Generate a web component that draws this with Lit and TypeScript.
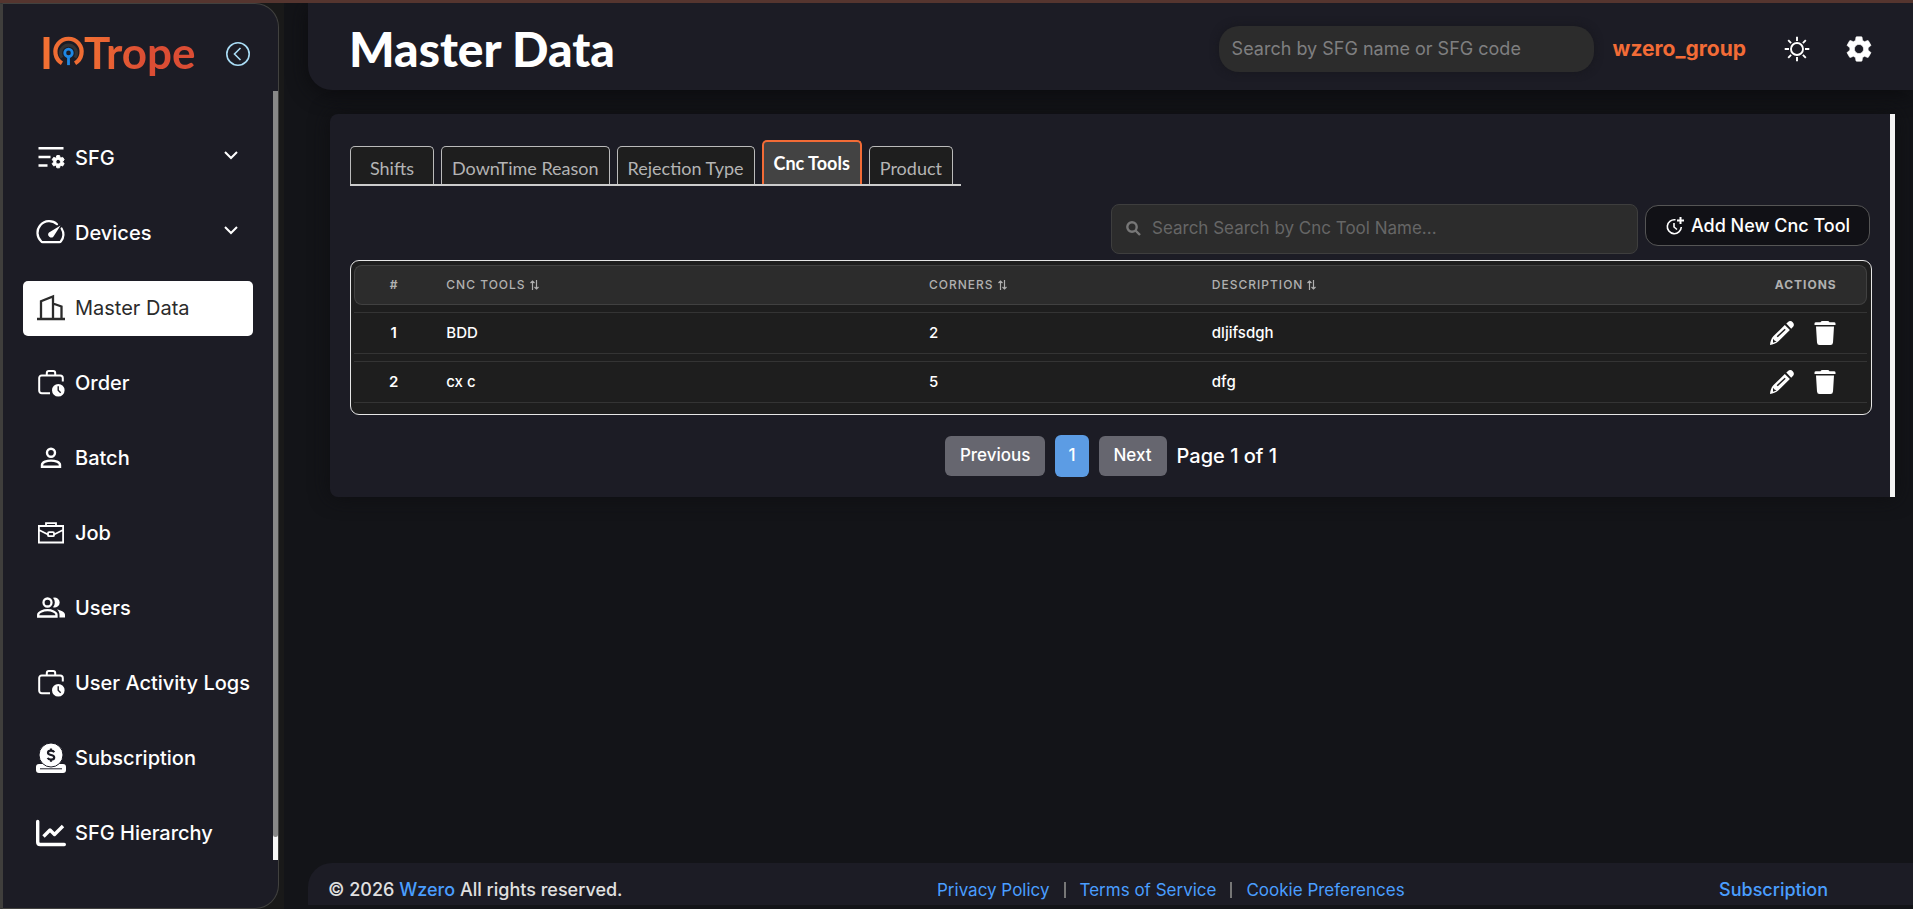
import { LitElement, html, css, svg, nothing } from "lit";
import { customElement, property, state } from "lit/decorators.js";
import { classMap } from "lit/directives/class-map.js";

const briefcaseClock = svg`<path fill="none" stroke="currentColor" stroke-width="2" stroke-linejoin="round" d="M13 24.200H4.800C3.200 24.200 2.200 23.200 2.200 21.600V9C2.200 7.400 3.200 6.400 4.800 6.400H23.200C24.800 6.400 25.800 7.400 25.800 9V12.500M9.800 6.400V4C9.800 2.800 10.500 2 11.800 2H16.200C17.500 2 18.200 2.800 18.200 4V6.400"/><path fill="currentColor" fill-rule="evenodd" d="M21.300 14.900a6.300 6.300 0 1 1 0 12.600a6.300 6.300 0 0 1 0-12.600zM20.500 17.200V21.500L23.200 24.300L24.200 23.300L21.900 20.900V17.200z"/>`;

const gearPath = "M19.14 12.94c.04-.3.06-.61.06-.94 0-.32-.02-.64-.07-.94l2.03-1.58a.49.49 0 0 0 .12-.61l-1.920-3.320a.488.488 0 0 0-.59-.22l-2.390.960c-.5-.38-1.030-.7-1.620-.94l-.36-2.540a.484.484 0 0 0-.48-.41h-3.840c-.24 0-.43.17-.47.41l-.36 2.540c-.59.24-1.130.57-1.620.94l-2.390-.96c-.22-.08-.47 0-.59.22L2.740 8.870c-.12.21-.08.47.12.61l2.030 1.580c-.05.3-.09.63-.09.94s.02.64.07.94l-2.030 1.580a.49.49 0 0 0-.12.61l1.920 3.320c.12.22.37.29.59.22l2.390-.96c.5.38 1.030.7 1.620.94l.36 2.540c.05.24.24.41.48.41h3.840c.24 0 .44-.17.47-.41l.36-2.540c.59-.24 1.130-.56 1.620-.94l2.390.96c.22.08.47 0 .59-.22l1.920-3.320c.12-.22.07-.47-.12-.61l-2.010-1.580zM12 15.600c-1.980 0-3.600-1.620-3.600-3.600s1.620-3.600 3.600-3.600 3.600 1.620 3.600 3.600-1.620 3.600-3.600 3.600z";

const icons: Record<string, unknown> = {
  sfg: svg`<path fill="none" stroke="currentColor" stroke-width="2.400" d="M1.500 4.300H26.500M1.500 13H13.500M1.500 21.500H10.500"/><g transform="translate(13.500 10) scale(.64)"><path fill="currentColor" stroke="currentColor" stroke-width="1.500" d=${gearPath}/></g>`,
  devices: svg`<path fill="none" stroke="currentColor" stroke-width="2.200" stroke-linecap="round" stroke-linejoin="round" d="M20 5.200A11.500 11.500 0 0 0 4.300 22.500C4.600 23 5 23.200 5.600 23.200H22.400C23 23.200 23.500 23 23.800 22.500A11.500 11.500 0 0 0 24.600 9.500"/><path fill="currentColor" d="M23.500 6.500L16.500 17.400A2.900 2.900 0 1 1 12 13.500z"/>`,
  building: svg`<path fill="none" stroke="currentColor" stroke-width="2.300" d="M0 25H28M4 25V7.200L16 2.500V25M16 9.500L24.500 12.500V25"/>`,
  order: briefcaseClock,
  batch: svg`<g fill="none" stroke="currentColor" stroke-width="2.400"><circle cx="14" cy="8.700" r="4"/><path d="M5 22.700V21C5 18 10 16.600 14 16.600S23 18 23 21V22.700z"/></g>`,
  job: svg`<g fill="none" stroke="currentColor" stroke-width="1.800"><path d="M1.900 7H26.100V23.500H1.900zM9 7V4.200H19V7M2 11L11 15.500M26 11L17 15.500"/><rect x="11" y="13.200" width="6" height="4" rx="1"/></g>`,
  users: svg`<g fill="none" stroke="currentColor" stroke-width="2.300"><circle cx="10.500" cy="8.500" r="4"/><path d="M1.200 22.500V20.800C1.200 18 6.500 16.200 10.500 16.200S19.500 18 19.500 20.800V22.500z"/></g><path fill="currentColor" d="M16 3.800A5 5 0 1 1 16 13.200A7 7 0 0 0 16 3.800zM20 15.400C23.500 16 28 17.700 28 20.700V23.600H22.500V20.700C22.500 18.500 21.500 16.700 20 15.400z"/>`,
  coin: svg`<path fill="currentColor" d="M2 20H26Q29 20 29 23V26Q29 29 26 29H2Q-1 29-1 26V23Q-1 20 2 20z"/><path stroke="#1c1c25" stroke-width="1" d="M3 24.800H25"/><circle cx="14" cy="11" r="12" fill="currentColor" stroke="#1c1c25" stroke-width="1"/><path fill="none" stroke="#1c1c25" stroke-width="2.200" d="M17.200 8.300C16.500 7 15.300 6.700 14 6.700C12.200 6.700 11 7.500 11 8.800C11 12 17.200 10 17.200 13.400C17.200 14.800 15.900 15.600 14 15.600C12.400 15.600 11.200 15 10.700 13.800M14 4.500V7M14 15.400V17.800"/>`,
  chart: svg`<path fill="none" stroke="currentColor" stroke-width="3.400" stroke-linecap="round" stroke-linejoin="round" d="M.700 2.500V23Q.700 25.500 3.200 25.500H27.300"/><path fill="none" stroke="currentColor" stroke-width="3.400" stroke-linejoin="round" d="M6.500 17.500L13 11L17.500 15.500L26 7"/>`,
};

interface NavItem { label: string; icon: string; expandable?: boolean; active?: boolean }

const NAV: NavItem[] = [
  { label: "SFG", icon: "sfg", expandable: true },
  { label: "Devices", icon: "devices", expandable: true },
  { label: "Master Data", icon: "building", active: true },
  { label: "Order", icon: "order" },
  { label: "Batch", icon: "batch" },
  { label: "Job", icon: "job" },
  { label: "Users", icon: "users" },
  { label: "User Activity Logs", icon: "order" },
  { label: "Subscription", icon: "coin" },
  { label: "SFG Hierarchy", icon: "chart" },
];

@customElement("side-nav")
export class SideNav extends LitElement {
  static styles = css`
    :host { display: block; flex: none; width: 284px; background: #191919; }
    * { box-sizing: border-box; }
    .shell { height: 100%; width: 279px; display: flex; flex-direction: column; background: #1c1c25;
      border: 1px solid #41413f; border-left: 3px solid #3f3e3c; border-radius: 0 24px 24px 0; padding-bottom: 48px; }
    .brand { display: flex; align-items: center; justify-content: space-between; height: 87px; padding: 12px 28px 0 37px; flex: none; }
    .logo { display: flex; align-items: center; font: 700 44px/48px Lato, sans-serif; }
    .logo svg { margin-top: -4px; }
    .logo span { padding-bottom: 4px; background: linear-gradient(90deg, #f27033, #db4d34 55%); background-clip: text; -webkit-background-clip: text; color: transparent; }
    .logo .first { background: #f27033; background-clip: text; -webkit-background-clip: text; }
    .collapse { all: unset; display: block; width: 24px; height: 24px; cursor: pointer; }
    svg { display: block; overflow: visible; }
    .scroll { flex: 1; min-height: 0; display: flex; }
    .items { flex: 1; min-width: 0; display: flex; flex-direction: column; gap: 20px; padding: 40px 20px 0; overflow: hidden; }
    .item { display: flex; align-items: center; gap: 10px; flex: none; height: 55px; padding: 0 16px 2px 14px; border-radius: 5px;
      color: #fff; text-decoration: none; font-size: 20px; font-weight: 500; line-height: 30px; white-space: nowrap; }
    .item.active { background: #fff; color: #2b2b2b; font-weight: 400; }
    .label { flex: 1; }
    .track { flex: none; width: 5px; background: #f7f7f7; }
    .thumb { height: 97%; background: #888; border-radius: 0 0 3px 3px; }
  `;
  render() {
    return html`<div class="shell">
      <div class="brand">
        <div class="logo" role="img" aria-label="IOTrope"><span class="first">I</span>
          <svg width="31" height="30" viewBox="0 0 33 32"><path d="M9.500 28A14 14 0 1 1 23.500 28" fill="none" stroke="#ef6c33" stroke-width="4.500"/><path d="M9.500 22A8.500 8.500 0 1 1 23.500 22" fill="none" stroke="#333" stroke-width="3.500"/><circle cx="16.500" cy="17" r="4" fill="none" stroke="#1e88e5" stroke-width="3"/><path d="M16.500 20.500V30" stroke="#1e88e5" stroke-width="3"/></svg>
          <span>Trope</span></div>
        <button class="collapse" aria-label="Collapse menu"><svg width="24" height="24" viewBox="0 0 24 24" fill="none" stroke="#a9dcf5" stroke-width="1.600"><circle cx="12" cy="12" r="11.200"/><path d="M14.500 6L8.500 12L14.500 18"/></svg></button>
      </div>
      <div class="scroll">
        <nav class="items">${NAV.map((n) => html`<a href="#" class=${classMap({ item: true, active: !!n.active })}>
          <svg width="28" height="28" viewBox="0 0 28 28">${icons[n.icon]}</svg><span class="label">${n.label}</span>
          ${n.expandable ? html`<svg width="12" height="12" viewBox="0 0 12 12" fill="none" stroke="currentColor" stroke-width="2"><path d="M0 0L6 6L12 0"/></svg>` : nothing}
        </a>`)}</nav>
        <div class="track"><div class="thumb"></div></div>
      </div>
    </div>`;
  }
}

@customElement("page-header")
export class PageHeader extends LitElement {
  @property() heading = "";
  static styles = css`
    :host { display: flex; align-items: center; flex: none; height: 87px; box-sizing: border-box; padding: 4px 40px 0 41px; background: #1c1c25;
      border-bottom-left-radius: 24px; box-shadow: 0 4px 20px #0c0c0f; }
    h1 { margin: 0 auto 0 0; color: #fff; font: 900 48px/60px Lato, sans-serif; }
    input { box-sizing: border-box; width: 375px; height: 46px; border: 0; border-radius: 20px; padding: 0 13px; background: #2c2c2c; color: #ddd;
      font: 400 18px/24px Inter, sans-serif; margin: 0 19px 0 0; box-shadow: 0 0 8px #17171d; }
    input::placeholder { color: #7f7f80; opacity: 1; }
    .user { color: #f26b36; font: 700 21px/24px Inter, sans-serif; margin-right: 37px; }
    button { all: unset; display: block; cursor: pointer; color: #fff; }
    button + button { margin-left: 34px; }
    svg { display: block; }
  `;
  render() {
    return html`<h1>${this.heading}</h1>
      <input type="search" aria-label="Search SFG" placeholder="Search by SFG name or SFG code" />
      <span class="user">wzero_group</span>
      <button aria-label="Toggle theme"><svg width="28" height="28" viewBox="0 0 28 28" fill="none" stroke="currentColor" stroke-width="1.900"><circle cx="14" cy="14" r="6"/><path d="M14 1.700V6M14 22V26.300M1.700 14H6M22 14H26.300M5.200 5.200L8.100 8.100M19.900 19.900L22.800 22.800M5.200 22.800L8.100 19.900M19.900 8.100L22.800 5.200"/></svg></button>
      <button aria-label="Settings"><svg width="28" height="28" viewBox="1 1 22 22" fill="currentColor"><path d=${gearPath} stroke="currentColor" stroke-width=".5" /></svg></button>`;
  }
}

interface Tool { name: string; corners: number; description: string }

@customElement("cnc-tools")
export class CncTools extends LitElement {
  @state() private active = "Cnc Tools";
  private tabs = ["Shifts", "DownTime Reason", "Rejection Type", "Cnc Tools", "Product"];
  private rows: Tool[] = [
    { name: "BDD", corners: 2, description: "dljifsdgh" },
    { name: "cx c", corners: 5, description: "dfg" },
  ];
  static styles = css`
    :host { display: flex; background: #1c1c25; border-radius: 8px 0 0 8px; border-right: 5px solid #f4f4f4; box-shadow: 0 0 20px #0e0e11; }
    * { box-sizing: border-box; }
    button { font-family: inherit; cursor: pointer; }
    svg { display: block; }
    .body { flex: 1; min-width: 0; padding: 26px 18px 20px 20px; }
    .tabs { display: flex; align-items: flex-end; gap: 7px; width: fit-content; padding-right: 8px; border-bottom: 2px solid #ccc; }
    .tab { min-width: 84px; height: 38px; padding: 4px 10px 0; border: 1px solid #bbb; border-bottom: 0; border-radius: 5px 5px 0 0;
      background: #1e1e1e; color: #b4b4b4; font: 400 18px/24px Lato, sans-serif; white-space: nowrap; }
    .tab.active { height: 44px; padding: 0 10px; border: 2px solid #f26b36; border-bottom: 0; background: #434343; color: #fff; font-weight: 700; }
    .tools { display: flex; align-items: flex-start; justify-content: flex-end; gap: 7px; margin: 18px 2px 6px 0; }
    .search { display: flex; align-items: center; gap: 11px; width: 527px; height: 50px; padding: 0 14px 2px; border: 1px solid #3e3e3e; border-radius: 8px; background: #2c2c2c; color: #777; }
    .search input { flex: 1; min-width: 0; border: 0; padding: 0; outline: 0; background: none; color: #ddd; font: 400 17px/24px Inter, sans-serif; }
    .search input::placeholder { color: #666; opacity: 1; }
    .add { display: flex; align-items: center; justify-content: center; gap: 6px; width: 225px; height: 41px; margin-top: 1px; padding: 0; border: 1px solid #555; border-radius: 13px;
      background: #111116; color: #fff; font-size: 18px; font-weight: 500; line-height: 24px; white-space: nowrap; }
    .frame { border: 1px solid #e6e6e6; border-radius: 9px; background: #1e1e1e; padding: 4px 4px 11px 3px; }
    table { width: 100%; table-layout: fixed; border-collapse: separate; border-spacing: 0; color: #fff; font-size: 15px; line-height: 20px; font-weight: 500; }
    th, td { text-align: left; padding: 0; }
    th { height: 40px; background: #2c2c2c; border: solid #414141; border-width: 1px 0; color: #b0b0b0; font-size: 12px; font-weight: 500; letter-spacing: 1px; }
    th:first-child { border-left-width: 1px; border-radius: 8px 0 0 8px; font-weight: 700; }
    th:last-child { border-right-width: 1px; border-radius: 0 8px 8px 0; font-weight: 700; }
    th:first-child, td:first-child { text-align: center; padding-right: 13px; }
    th:last-child { padding-right: 34px; text-align: right; }
    td:last-child { padding-right: 31px; }
    td { height: 42px; border: solid #343434; border-width: 1px 0; }
    td:first-child { font-weight: 600; }
    .gap td { height: 7px; border: 0; }
    .c1 { width: 6.100%; } .c2 { width: 31.900%; } .c3 { width: 18.700%; }
    .sort { display: inline-flex; align-items: center; gap: 4px; }
    .actions { display: flex; justify-content: flex-end; gap: 20px; }
    .actions button { all: unset; display: block; cursor: pointer; }
    .pager { display: flex; align-items: center; justify-content: center; gap: 10px; margin-top: 20px; color: #fff; font-size: 20px; font-weight: 500; line-height: 30px; height: 42px; }
    .pager button { border: 0; height: 40px; padding: 0 15px 2px; border-radius: 6px; background: #66666f; color: #fff; font-size: 17px; font-weight: 500; line-height: 24px; }
    .pager .current { height: 42px; padding: 0 13px 2px; background: #5c9ce4; }
  `;
  private sortable(label: string) {
    return html`<span class="sort">${label}<svg width="9" height="10" viewBox="0 0 9 10" fill="none" stroke="currentColor" stroke-width="1.200"><path d="M2.500 10V1M.500 3L2.500 1L4.500 3M6.500 0V9M4.500 7L6.500 9L8.500 7"/></svg></span>`;
  }
  render() {
    return html`<div class="body">
      <div class="tabs" role="tablist">${this.tabs.map((t) => html`<button role="tab" aria-selected=${t === this.active} class=${classMap({ tab: true, active: t === this.active })} @click=${() => (this.active = t)}>${t}</button>`)}</div>
      <div class="tools">
        <label class="search"><svg width="15" height="15" viewBox="0 0 15 15" fill="none" stroke="currentColor" stroke-width="2.400"><circle cx="6" cy="6" r="4.700"/><path d="M9.500 9.500L14 14"/></svg>
          <input type="text" aria-label="Search Cnc tools" placeholder="Search Search by Cnc Tool Name..." /></label>
        <button class="add"><svg width="20" height="20" viewBox="0 0 20 20" fill="none" stroke="currentColor" stroke-width="1.600"><path d="M10.500 3.800A7 7 0 1 0 16.300 11M9 7V11L12 13.500"/><path d="M15.500 1V8M12 4.500H19" stroke-width="2"/></svg>Add New Cnc Tool</button>
      </div>
      <div class="frame"><table>
        <colgroup><col class="c1" /><col class="c2" /><col class="c3" /><col /><col class="c1" /></colgroup>
        <thead><tr><th>#</th><th>${this.sortable("CNC TOOLS")}</th><th>${this.sortable("CORNERS")}</th><th>${this.sortable("DESCRIPTION")}</th><th>ACTIONS</th></tr></thead>
        <tbody>${this.rows.map((r, i) => html`<tr class="gap"><td colspan="5"></td></tr>
          <tr><td>${i + 1}</td><td>${r.name}</td><td>${r.corners}</td><td>${r.description}</td><td><div class="actions">
            <button aria-label="Edit"><svg width="24" height="24" viewBox="0 0 24 24"><path fill="currentColor" d="M16.300 2.600L17.800 1.200C19.300-.300 21.300-.300 22.700 1.200C24.200 2.600 24.300 4.500 22.900 6L21.200 7.700zM14.800 4L19.900 9.100L8.500 20.200C6 22.300 3 23.300 0 24C.300 20.700 1.300 17.500 3.300 15.300z"/><path d="M7.200 15.800L15.200 8.200" stroke="#1e1e1e" stroke-width="1.500"/><path d="M3 17.800L4.500 19.500L6.500 20.500L3 21.800z" fill="#1e1e1e"/></svg></button>
            <button aria-label="Delete"><svg width="22" height="24" viewBox="0 0 22 24" fill="currentColor"><path d="M2 1.200H6.500Q7 0 8.500 0H13.500Q15 0 15.500 1.200H20Q21.500 1.200 21.500 2.500V4H.500V2.500Q.500 1.200 2 1.200zM2 5.500H20L19 21.500Q18.800 24 16.500 24H5.500Q3.200 24 3 21.500z"/></svg></button>
          </div></td></tr>`)}</tbody>
      </table></div>
      <div class="pager"><button>Previous</button><button class="current">1</button><button>Next</button><span>Page 1 of 1</span></div>
    </div>`;
  }
}

@customElement("page-footer")
export class PageFooter extends LitElement {
  static styles = css`
    :host { display: flex; justify-content: space-between; align-items: center; flex: none; height: 42px; box-sizing: border-box; padding: 12px 85px 0 20px; margin-bottom: 4px;
      background: #1c1c25; border-top-left-radius: 24px; color: #e0e0e0; font-size: 18px; font-weight: 500; line-height: 24px; }
    a { color: #4a9eff; text-decoration: none; }
    .links { display: flex; align-items: center; gap: 14px; font-size: 17px; font-weight: 400; }
    .bar { width: 2px; height: 16px; background: #777; }
  `;
  render() {
    return html`<div>© 2026 <a href="#">Wzero</a> All rights reserved.</div>
      <div class="links"><a href="#">Privacy Policy</a><span class="bar"></span><a href="#">Terms of Service</a><span class="bar"></span><a href="#">Cookie Preferences</a></div>
      <a href="#">Subscription</a>`;
  }
}

@customElement("app-root")
export class AppRoot extends LitElement {
  static styles = css`
    :host { display: flex; height: 100vh; box-sizing: border-box; border-top: 3px solid #55352f; background: #131418; font-family: Inter, "Noto Sans", sans-serif; overflow: hidden; }
    .page { flex: 1; min-width: 0; display: flex; flex-direction: column; padding-left: 24px; }
    main { flex: 1; padding: 24px 18px 0 22px; }
  `;
  render() {
    return html`<side-nav></side-nav>
      <div class="page"><page-header heading="Master Data"></page-header><main><cnc-tools></cnc-tools></main><page-footer></page-footer></div>`;
  }
}
